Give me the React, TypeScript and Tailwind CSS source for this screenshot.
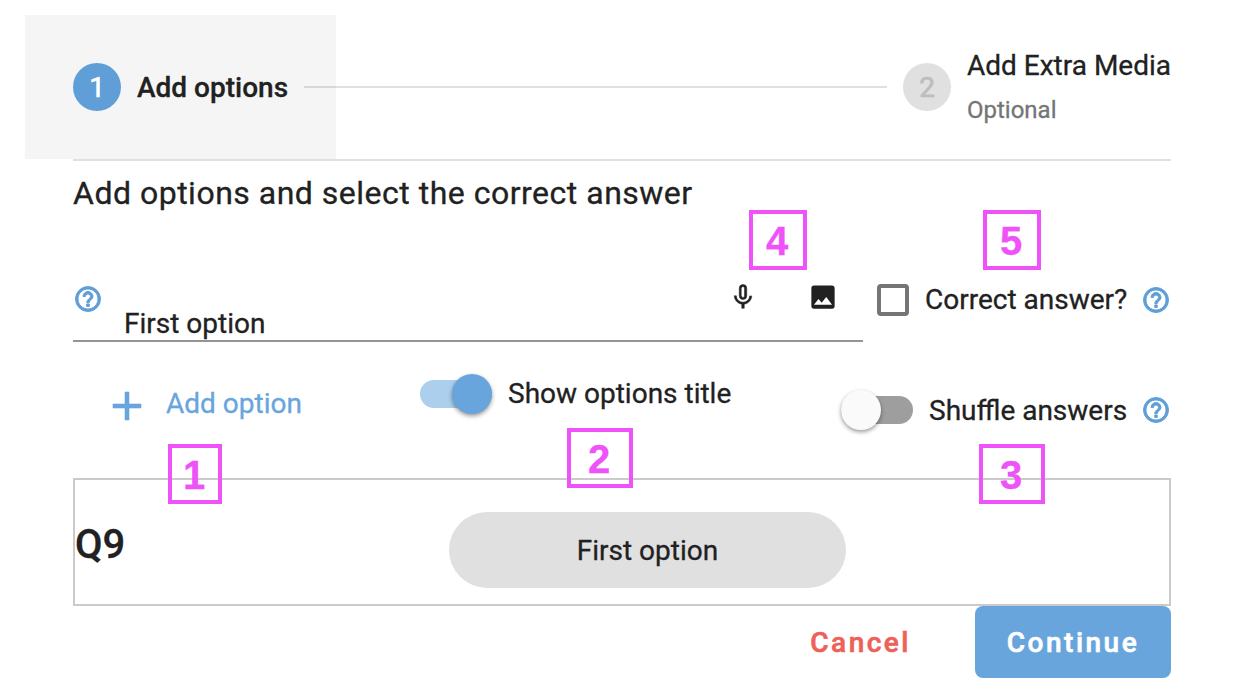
import React from "react";

const HELP =
  "M11,18H13V16H11V18M12,2A10,10 0 0,0 2,12A10,10 0 0,0 12,22A10,10 0 0,0 22,12A10,10 0 0,0 12,2M12,20C7.59,20 4,16.41 4,12C4,7.59 7.59,4 12,4C16.41,4 20,7.59 20,12C20,16.41 16.41,20 12,20M12,6A4,4 0 0,0 8,10H10A2,2 0 0,1 12,8A2,2 0 0,1 14,10C14,12 11,11.75 11,15H13C13,12.75 16,12.5 16,10A4,4 0 0,0 12,6Z";
const MIC =
  "M17.3,11C17.3,14 14.76,16.1 12,16.1C9.24,16.1 6.7,14 6.7,11H5C5,14.41 7.72,17.23 11,17.72V21H13V17.72C16.28,17.23 19,14.41 19,11M10.8,4.9C10.8,4.24 11.34,3.7 12,3.7C12.66,3.7 13.2,4.24 13.2,4.9L13.19,11.1C13.19,11.76 12.66,12.3 12,12.3C11.34,12.3 10.8,11.76 10.8,11.1M12,14A3,3 0 0,0 15,11V5A3,3 0 0,0 12,2A3,3 0 0,0 9,5V11A3,3 0 0,0 12,14Z";
const IMAGE =
  "M8.5,13.5L11,16.5L14.5,12L19,18H5M21,19V5C21,3.89 20.1,3 19,3H5A2,2 0 0,0 3,5V19A2,2 0 0,0 5,21H19A2,2 0 0,0 21,19Z";
const PLUS = "M19,13H13V19H11V13H5V11H11V5H13V11H19V13Z";

function Icon({ d, className, weight = 0 }: { d: string; className: string; weight?: number }) {
  return (
    <svg
      viewBox="0 0 24 24"
      fill="currentColor"
      stroke="currentColor"
      strokeWidth={weight}
      className={`block shrink-0 ${className}`}
    >
      <path d={d} />
    </svg>
  );
}

function Marker({ n, className }: { n: number; className: string }) {
  return (
    <div
      className={`absolute flex h-[60px] items-center justify-center border-4 border-[#ee52f8] font-['Liberation_Sans',sans-serif] text-[40px] leading-none font-bold text-[#ee52f8] ${className}`}
    >
      <span className="mt-px mr-[2px]">{n}</span>
    </div>
  );
}

export default function App() {
  return (
    <div className="relative flex h-[694px] w-[1234px] flex-col overflow-hidden bg-white pt-[15px] pr-[63px] pl-[73px] font-[Roboto,sans-serif] text-[28px] leading-8 whitespace-nowrap text-[#212121] [-webkit-text-stroke:0.3px]">
      <header className="-ml-12 flex h-36 shrink-0 items-center">
        <div className="flex h-36 w-[311px] shrink-0 items-center gap-4 bg-[#f5f5f5] pl-12">
          <div className="flex size-12 items-center justify-center rounded-full bg-[#5f9ed6] pt-0.5 text-white [-webkit-text-stroke:0.7px]">1</div>
          <div className="pt-0.5 font-medium">Add options</div>
        </div>
        <div className="z-10 -ml-8 h-[2px] flex-1 bg-black/12" />
        <div className="ml-4 flex size-12 items-center justify-center rounded-full bg-[#e0e0e0] pt-0.5 text-[#bdbdbd] [-webkit-text-stroke:0.7px]">2</div>
        <div className="ml-4 flex h-[88px] w-[204px] flex-col justify-between">
          <div className="pt-[7px]">Add Extra Media</div>
          <div className="pb-[5px] text-[24px] text-[#757575]">Optional</div>
        </div>
      </header>
      <div className="h-[2px] shrink-0 bg-[#e0e0e0]" />

      <h1 className="mt-3 h-10 text-[32px] leading-10 tracking-[0.5px]">Add options and select the correct answer</h1>

      <div className="mt-[59px] flex h-[82px] shrink-0">
        <div className="flex h-[70px] w-[790px] items-start border-b-2 border-[#949494]">
          <Icon d={HELP} weight={0.75} className="mt-[12px] size-[30px] text-[#5f9ed6]" />
          <div className="mt-[36px] ml-[21px] flex-1">First option</div>
          <Icon d={MIC} weight={0.4} className="mt-[10px] mr-px size-[30px]" />
          <Icon d={IMAGE} className="mt-[8.5px] mr-[24px] ml-[48px] size-8 p-[0.5px]" />
        </div>
        <div className="ml-[14px] flex h-14 flex-1 items-center">
          <div className="size-8 shrink-0 rounded-[4px] border-4 border-[#757575]" />
          <div className="ml-4 flex-1">Correct answer?</div>
          <Icon d={HELP} weight={0.75} className="size-[30px] text-[#5f9ed6]" />
        </div>
      </div>

      <div className="mt-[12px] flex h-28 shrink-0 items-start">
        <div className="mt-[11px] ml-[30px] flex w-[317px] items-center text-[#69a5dd]">
          <Icon d={PLUS} weight={0.3} className="mt-[5px] size-[48px]" />
          <div className="ml-[15px]">Add option</div>
        </div>
        <div className="mt-[12px] flex w-[421px] items-center">
          <div className="flex h-7 w-[72px] items-center justify-end rounded-full bg-[#abcfed]">
            <div className="size-10 rounded-full bg-[#69a5dd] shadow-[0_2px_4px_rgba(0,0,0,0.4)]" />
          </div>
          <div className="ml-4">Show options title</div>
        </div>
        <div className="mt-[28px] flex h-8 flex-1 items-center">
          <div className="flex h-7 w-[72px] items-center rounded-full bg-[#9e9e9e]">
            <div className="size-10 rounded-full bg-[#fafafa] shadow-[0_2px_4px_rgba(0,0,0,0.4)]" />
          </div>
          <div className="ml-4 flex-1 pt-0.5">Shuffle answers</div>
          <Icon d={HELP} weight={0.75} className="size-[30px] text-[#5f9ed6]" />
        </div>
      </div>

      <section className="flex h-32 shrink-0 items-center border-2 border-[#cacaca]">
        <div className="w-[374px] pt-1.5 text-[40px] leading-10 font-medium">Q9</div>
        <div className="mt-4 flex h-[76px] w-[397px] items-center justify-center rounded-full bg-[#e0e0e0] pt-0.5">First option</div>
      </section>

      <footer className="flex h-[72px] shrink-0 items-center justify-end font-medium tracking-[2.5px] [-webkit-text-stroke:0.6px]">
        <button className="mr-[64px] pt-0.5 text-[#ee605a]">Cancel</button>
        <button className="h-[72px] w-[196px] rounded-lg bg-[#69a5dd] pt-0.5 text-white">Continue</button>
      </footer>

      <Marker n={1} className="top-[444px] left-[168px] w-[54px]" />
      <Marker n={2} className="top-[428px] left-[567px] w-[66px]" />
      <Marker n={3} className="top-[444px] left-[979px] w-[66px]" />
      <Marker n={4} className="top-[210px] left-[749px] w-[58px]" />
      <Marker n={5} className="top-[210px] left-[983px] w-[58px]" />
    </div>
  );
}
